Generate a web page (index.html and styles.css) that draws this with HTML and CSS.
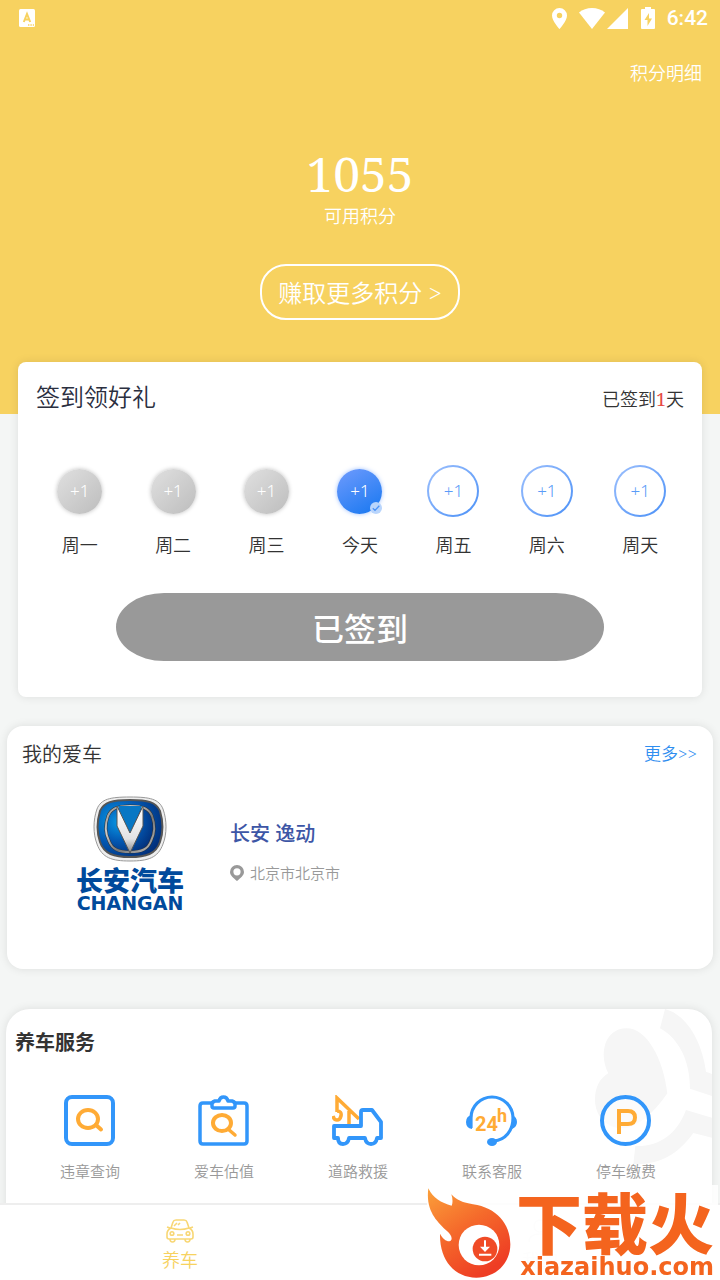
FILE: index.html
```html
<!DOCTYPE html>
<html lang="zh-CN">
<head>
    <meta charset="UTF-8">
    <meta name="viewport" content="width=device-width, initial-scale=1.0">
    <title>积分签到</title>
    <link rel="stylesheet" href="styles.css">
</head>
<body>
    <header class="hero">
        <!-- Status bar -->
        <div class="status-bar">
            <svg width="16" height="18" viewBox="0 0 16 18">
                <rect width="16" height="18" rx="1.5" fill="#fff"/>
                <path d="M4.8 13 8 5l3.2 8M6 10.4h4" fill="none" stroke="#f7d260" stroke-width="2"/>
                <path d="M9 16h1.4M11.4 16h1.4M13.8 16h1.2" stroke="#f7d260" stroke-width="1.4"/>
            </svg>
            <div class="status-icons">
                <svg width="15" height="21" viewBox="0 0 15 21">
                    <path fill="#fff" fill-rule="evenodd" d="M7.500 0A7.500 7.500 0 0 0 0 7.500C0 13 7.500 21 7.500 21S15 13 15 7.500A7.500 7.500 0 0 0 7.500 0zM7.500 4.800a2.700 2.700 0 1 1 0 5.400a2.700 2.700 0 0 1 0-5.400z"/>
                </svg>
                <svg class="wifi" width="26" height="21" viewBox="0 0 26 21">
                    <path fill="#fff" d="M13 21 0 4.500C3.500 1.500 8 0 13 0s9.500 1.500 13 4.500z"/>
                </svg>
                <svg class="signal" width="21" height="21" viewBox="0 0 21 21">
                    <path fill="#fff" d="M21 0v21H0z"/>
                </svg>
                <svg class="battery" width="14" height="22" viewBox="0 0 14 22">
                    <path fill="#fff" d="M4 0h6v2h3q1 0 1 1v18q0 1-1 1H1q-1 0-1-1V3q0-1 1-1h3z"/>
                    <path fill="#f7d260" d="M8 6 3.500 13H6.500v6L11 11.500H8z"/>
                </svg>
                <span class="clock">6:42</span>
            </div>
        </div>

        <a class="detail-link" href="#">积分明细</a>
        <div class="points">1055</div>
        <div class="points-label">可用积分</div>
        <button class="earn-btn" type="button">赚取更多积分 &gt;</button>
    </header>

    <main class="content">
        <!-- Sign in -->
        <section class="card sign-card">
            <div class="card-head">
                <h2 class="sign-title">签到领好礼</h2>
                <span class="sign-count">已签到<em>1</em>天</span>
            </div>
            <ul class="days">
                <li><span class="dot-wrap"><span class="dot past">+1</span></span>周一</li>
                <li><span class="dot-wrap"><span class="dot past">+1</span></span>周二</li>
                <li><span class="dot-wrap"><span class="dot past">+1</span></span>周三</li>
                <li>
                    <span class="dot-wrap">
                        <span class="dot today">+1
                            <svg class="tick" width="12" height="12" viewBox="0 0 12 12">
                                <circle cx="6" cy="6" r="6" fill="#b9d5fc"/>
                                <path d="M2.800 6.200 5 8.400 9.300 3.800" fill="none" stroke="#4a92f7" stroke-width="1.300"/>
                            </svg>
                        </span>
                    </span>今天
                </li>
                <li><span class="dot-wrap"><span class="dot next">+1</span></span>周五</li>
                <li><span class="dot-wrap"><span class="dot next">+1</span></span>周六</li>
                <li><span class="dot-wrap"><span class="dot next">+1</span></span>周天</li>
            </ul>
            <button class="signed-btn" type="button">已签到</button>
        </section>

        <!-- My car -->
        <section class="card car-card">
            <div class="card-head">
                <h2 class="car-title">我的爱车</h2>
                <a class="more-link" href="#">更多&gt;&gt;</a>
            </div>
            <div class="car">
                <div class="brand">
                    <svg width="76" height="66" viewBox="0 0 76 66">
                        <defs>
                            <linearGradient id="chrome" x1="0" y1="0" x2="1" y2="1">
                                <stop offset="0" stop-color="#8a8a8a"/>
                                <stop offset=".3" stop-color="#ccc"/>
                                <stop offset=".6" stop-color="#777"/>
                                <stop offset="1" stop-color="#bbb"/>
                            </linearGradient>
                            <radialGradient id="blue" cx=".28" cy=".35" r=".8">
                                <stop offset="0" stop-color="#079ae6"/>
                                <stop offset=".5" stop-color="#0359b3"/>
                                <stop offset="1" stop-color="#022c76"/>
                            </radialGradient>
                            <linearGradient id="silver" x1="0" y1="0" x2="0" y2="1">
                                <stop offset="0" stop-color="#fff"/>
                                <stop offset=".7" stop-color="#e2e2e4"/>
                                <stop offset="1" stop-color="#888"/>
                            </linearGradient>
                        </defs>
                        <path d="M38 1C58 1 67 3 71 13c4 11 4 25 0 35-5 14-15 17-33 17S10 62 5 48C1 38 1 24 5 13 9 3 18 1 38 1z" fill="#eee" stroke="#999" stroke-width="1"/>
                        <path d="M38 4C56 4 64 6 68 15c3 10 3 22 0 31-4 12-14 15-30 15S12 58 8 46C5 37 5 25 8 15 12 6 20 4 38 4z" fill="url(#blue)" stroke="#555" stroke-width="2"/>
                        <path d="M38 10c14 0 19 3 22 10 3 8 3 17-1 25-3 8-9 11-21 11s-18-3-21-11c-4-8-4-17-1-25 3-7 8-10 22-10z" fill="url(#blue)" stroke="#333" stroke-width="3"/>
                        <path d="M38 10c14 0 19 3 22 10 3 8 3 17-1 25-3 8-9 11-21 11s-18-3-21-11c-4-8-4-17-1-25 3-7 8-10 22-10z" fill="none" stroke="url(#chrome)" stroke-width="2"/>
                        <path d="M26 10h24L38 37z" fill="#0877c4"/>
                        <path d="M25 10v20l13 27 13-27V10L38 37z" fill="url(#silver)" stroke="#555" stroke-width="1"/>
                    </svg>
                    <span class="brand-cn">长安汽车</span>
                    <span class="brand-en">CHANGAN</span>
                </div>
                <div class="car-info">
                    <h3 class="car-name">长安 逸动</h3>
                    <p class="car-city">
                        <svg width="14" height="16" viewBox="0 0 14 16">
                            <path fill="#999" fill-rule="evenodd" d="M7 0a7 7 0 0 0-7 7c0 3.500 3.500 6 7 9 3.500-3 7-5.500 7-9a7 7 0 0 0-7-7zM7 3.200a3.600 3.600 0 1 1 0 7.200a3.600 3.600 0 0 1 0-7.200z"/>
                        </svg>
                        北京市北京市
                    </p>
                </div>
            </div>
        </section>

        <!-- Services -->
        <section class="card service-card">
            <svg class="service-bg" width="132" height="180" viewBox="0 57 396 540">
                <g fill="#f6f6f6">
                    <path d="M85 250C55 190 75 115 140 115c60 0 110 90 122 195-35 50-65 78-90 90-60 40-127-5-127-70 0-40 15-65 40-80z"/>
                    <path d="M255 57c60 15 110 90 123 188l18 7v66l-66-22C330 210 295 145 240 115z"/>
                    <path d="M318 360l78 23v60l-56-14c-50 70-110 97-180 93l6-54c70 3 125-35 152-108z"/>
                </g>
            </svg>
            <h2 class="service-title">养车服务</h2>
            <nav class="services">
                <a href="#">
                    <svg width="52" height="52" viewBox="0 0 52 52" fill="none">
                        <rect x="2" y="2" width="47" height="47" rx="6" stroke="#3296fa" stroke-width="4"/>
                        <ellipse cx="24" cy="24" rx="10" ry="9" stroke="#ffab35" stroke-width="4"/>
                        <path d="m32 30 5 4.500" stroke="#ffab35" stroke-width="4" stroke-linecap="round"/>
                    </svg>
                    违章查询
                </a>
                <a href="#">
                    <svg width="52" height="52" viewBox="0 0 52 52" fill="none">
                        <path d="M14 8H5q-3 0-3 3v35q0 3 3 3h41q3 0 3-3V11q0-3-3-3h-9" stroke="#3296fa" stroke-width="3.500"/>
                        <path d="M16 13q-2 0-2-2V9q0-2 3-3h4q1-4 4.500-4T30 6h4q3 1 3 3v2q0 2-2 2z" stroke="#3296fa" stroke-width="3.500" stroke-linejoin="round"/>
                        <ellipse cx="24" cy="28" rx="9" ry="8" stroke="#ffab35" stroke-width="4"/>
                        <path d="m30 34 7 6" stroke="#ffab35" stroke-width="3.500" stroke-linecap="round"/>
                    </svg>
                    爱车估值
                </a>
                <a href="#">
                    <svg width="52" height="52" viewBox="0 0 52 52" fill="none">
                        <path d="M5 17V3l22 21M17 16v13M5 16q5 0 4 5-1 4-4 4t-4-4" stroke="#ffab35" stroke-width="3.500"/>
                        <path d="M6 43H2V31h27V17q0-2 2-2h9l9 12v16h-4q-1 6-6 6t-6-6H17q-1 6-6 6t-5-6z" stroke="#3296fa" stroke-width="3.800" stroke-linejoin="round"/>
                    </svg>
                    道路救援
                </a>
                <a href="#">
                    <svg width="52" height="52" viewBox="0 0 52 52" fill="none">
                        <path d="M5 33V23a21 21 0 0 1 42 0c0 13-8 22-19 23" stroke="#3296fa" stroke-width="3.200"/>
                        <path d="M6 20v14q-6-1-6-7t6-7zM46 20v14q5-2 5-7t-5-7z" fill="#3296fa"/>
                        <ellipse cx="26" cy="47" rx="5" ry="4" fill="#3296fa"/>
                        <text class="icon-24" x="9" y="36">24</text>
                        <text class="icon-h" x="31" y="27">h</text>
                    </svg>
                    联系客服
                </a>
                <a href="#">
                    <svg width="52" height="52" viewBox="0 0 52 52" fill="none">
                        <circle cx="25.500" cy="25.500" r="23.500" fill="#fff" fill-opacity=".6" stroke="#3296fa" stroke-width="4"/>
                        <path d="M19 39V16h9q7 0 7 6.500T28 29H19" stroke="#ffab35" stroke-width="4"/>
                    </svg>
                    停车缴费
                </a>
            </nav>
        </section>
    </main>

    <!-- Bottom tabs -->
    <nav class="tabs">
        <a class="tab active" href="#">
            <svg width="28" height="24" viewBox="0 0 28 24" fill="none" stroke="#f8d775" stroke-width="1.600">
                <path d="M5 9 7 3q.6-2 3-2h8q2.400 0 3 2l2 6q4 2 4 6v3q0 2-2 2H3q-2 0-2-2v-3q0-4 4-6zM5 9q9 3 18 0M1 8l3 1M27 8l-3 1"/>
                <circle cx="6" cy="14.500" r="1.800"/>
                <circle cx="22" cy="14.500" r="1.800"/>
                <path d="M11 16h6M8 7l3-3M12 6l2-2M4 20q0 3 2.500 3T9 20M19 20q0 3 2.500 3t2.500-3"/>
            </svg>
            养车
        </a>
        <a class="tab" href="#">
            <svg width="28" height="24" viewBox="0 0 28 24" fill="none" stroke="#f0f0f0" stroke-width="1.600">
                <circle cx="14" cy="7" r="6"/>
                <path d="M3 23q0-8 11-8t11 8"/>
            </svg>
            我的
        </a>
    </nav>

    <!-- Site mark -->
    <div class="mark">
        <svg width="84" height="92" viewBox="0 0 252 276">
            <defs>
                <linearGradient id="fire" x1="0" y1="0" x2=".6" y2="1">
                    <stop offset="0" stop-color="#fba03a"/>
                    <stop offset=".5" stop-color="#f56a2b"/>
                    <stop offset="1" stop-color="#ee3d24"/>
                </linearGradient>
            </defs>
            <path fill="url(#fire)" d="M4 4c14 30 38 43 70 52 4-10 3-22-1-34 15 18 35 25 65 30 70 10 112 58 112 120 0 58-44 100-102 100-65 0-111-52-109-132 8 15 17 22 28 23 11-4 9-16-7-31C31 104-5 72 4 4z"/>
            <circle cx="156" cy="174" r="61" fill="#fff"/>
            <circle cx="174" cy="186" r="37" fill="#f04b26"/>
            <path d="M174 160v25M156 203h37" stroke="#fff" stroke-width="6"/>
            <path d="M159 179h30l-15 16z" fill="#fff"/>
        </svg>
        <div class="mark-text">
            <span class="mark-cn">下载火</span>
            <span class="mark-url">xiazaihuo.com</span>
        </div>
    </div>
</body>
</html>
```
FILE: styles.css
```css
* {
    box-sizing: border-box;
}

body {
    margin: 0;
    min-height: 100vh;
    overflow: hidden;
    background: #f4f6f5;
    color: #333;
    font-family: "Noto Serif", "Noto Sans CJK SC", serif;
    font-size: 18px;
    font-weight: 350;
}

h2,
h3,
p,
ul {
    margin: 0;
    padding: 0;
}

a {
    color: inherit;
    text-decoration: none;
}

button {
    font-family: inherit;
    font-weight: inherit;
    cursor: pointer;
}

svg {
    display: block;
    flex-shrink: 0;
}

/* header */
.hero {
    display: flex;
    flex-direction: column;
    align-items: center;
    height: 414px;
    background: #f7d260;
    color: #fff;
}

.status-bar {
    display: flex;
    justify-content: space-between;
    align-items: center;
    width: 100%;
    height: 36px;
    padding: 0 12px 0 19px;
}

.status-icons {
    display: flex;
    align-items: center;
}

.wifi {
    margin-left: 12px;
}

.signal {
    margin-left: 2px;
}

.battery {
    margin: 0 12px 0 13px;
}

.clock {
    font-family: Roboto, sans-serif;
    font-size: 21px;
    font-weight: 500;
    line-height: 36px;
}

.detail-link {
    align-self: flex-end;
    margin: 23px 18px 0 0;
    line-height: 28px;
}

.points {
    margin-top: 57px;
    font-size: 48px;
    font-weight: normal;
    line-height: 60px;
}

.points-label {
    line-height: 24px;
}

.earn-btn {
    height: 56px;
    margin-top: 36px;
    padding: 0 16px 2px;
    border: 2px solid #fff;
    border-radius: 26px;
    background: none;
    color: #fff;
    font-size: 24px;
}

/* cards */
.card {
    background: #fff;
    box-shadow: 0 0 10px rgba(0, 0, 0, 0.1);
}

.card-head {
    display: flex;
    justify-content: space-between;
    align-items: center;
}

.sign-card {
    position: relative;
    display: flex;
    flex-direction: column;
    margin: -52px 18px 0;
    padding-bottom: 36px;
    border-radius: 8px;
}

.sign-card .card-head {
    height: 72px;
    padding: 0 18px;
}

.sign-title {
    padding-bottom: 5px;
    color: #2b2f3f;
    font-size: 24px;
    font-weight: inherit;
}

.sign-count em {
    color: #e64a45;
    font-style: normal;
    font-weight: 400;
}

.days {
    display: grid;
    grid-template-columns: repeat(7, 1fr);
    margin-top: 31px;
    padding: 0 15px;
    list-style: none;
    text-align: center;
    line-height: 28px;
}

.dot-wrap {
    display: flex;
    justify-content: center;
    align-items: center;
    height: 52px;
    margin-bottom: 14px;
}

.dot {
    display: flex;
    justify-content: center;
    align-items: center;
    position: relative;
    width: 45px;
    height: 45px;
    border-radius: 50%;
    color: #fff;
    font-family: "Noto Sans", sans-serif;
    font-size: 17px;
}

.past {
    background: linear-gradient(135deg, #e0e0e0, #bdbdbd);
    box-shadow: 0 0 4px rgba(0, 0, 0, 0.25);
}

.today {
    background: linear-gradient(150deg, #6f9bfd, #1677f0);
    box-shadow: 0 0 4px rgba(60, 130, 255, 0.5);
}

.next {
    width: 52px;
    height: 52px;
    border: 2px solid transparent;
    background: linear-gradient(#fff, #fff) padding-box, linear-gradient(135deg, #9dc0fd, #4a90f7) border-box;
    color: #5a9cf8;
}

.tick {
    position: absolute;
    right: 0;
    bottom: 0;
}

.signed-btn {
    align-self: center;
    width: 71.4%;
    height: 68px;
    margin-top: 34px;
    padding-bottom: 2px;
    border: 0;
    border-radius: 48px / 34px;
    background: #999;
    color: #fff;
    font-size: 32px;
    font-weight: 500;
}

.car-card {
    margin: 29px 7px 0;
    padding-bottom: 57px;
    border-radius: 16px;
}

.car-card .card-head {
    height: 54px;
    padding: 0 16px 0 15px;
}

.car-title {
    font-size: 20px;
    font-weight: inherit;
}

.more-link {
    padding-bottom: 2px;
    color: #2f8ef0;
    font-size: 17px;
}

.car {
    display: flex;
    gap: 46px;
    padding: 16px 0 0 69px;
}

.brand {
    display: flex;
    flex-direction: column;
    align-items: center;
    width: 108px;
    color: #004a9c;
}

.brand-cn {
    margin-top: 6px;
    font-size: 27px;
    font-weight: 900;
    line-height: 26px;
}

.brand-en {
    font-family: "DejaVu Sans", sans-serif;
    font-size: 19px;
    font-weight: bold;
    line-height: 18px;
}

.car-info {
    padding-top: 24px;
}

.car-name {
    color: #3d56a6;
    font-size: 20px;
    font-weight: 500;
    line-height: 28px;
}

.car-city {
    display: flex;
    align-items: center;
    gap: 6px;
    margin-top: 14px;
    color: #999;
    font-size: 15px;
    line-height: 22px;
}

.service-card {
    position: relative;
    height: 300px;
    margin: 40px 8px 0 6px;
    border-radius: 24px;
    overflow: hidden;
}

.service-bg {
    position: absolute;
    top: 0;
    right: 0;
}

.service-title {
    padding: 20px 9px 0;
    font-size: 20px;
    line-height: 28px;
}

.services {
    display: grid;
    grid-template-columns: repeat(5, 1fr);
    position: relative;
    margin-top: 38px;
    padding: 0 19px 0 17px;
}

.services a {
    display: flex;
    flex-direction: column;
    align-items: center;
    gap: 12px;
    color: #999;
    font-size: 15px;
    line-height: 24px;
}

.icon-24,
.icon-h {
    fill: #ffab35;
    font-family: Roboto, sans-serif;
    font-size: 20px;
    font-weight: bold;
}

.icon-h {
    font-size: 18px;
}

/* bottom tabs */
.tabs {
    position: fixed;
    right: 0;
    bottom: 0;
    left: 0;
    display: flex;
    height: 77px;
    border-top: 2px solid #eee;
    background: #fff;
}

.tab {
    flex: 1;
    display: flex;
    flex-direction: column;
    align-items: center;
    padding-top: 14px;
    color: #f0f0f0;
    line-height: 34px;
}

.tab.active {
    color: #f7d260;
}

.mark {
    position: fixed;
    right: 2px;
    bottom: 0;
    display: flex;
    width: 291px;
    height: 95px;
    padding-top: 2px;
    background: rgba(255, 255, 255, 0.85);
    color: #f4641e;
}

.mark-text {
    display: flex;
    flex-direction: column;
    align-items: flex-end;
    flex: 1;
    padding-right: 4px;
}

.mark-cn {
    margin-top: 6px;
    font-size: 66px;
    font-weight: 900;
    line-height: 60px;
}

.mark-url {
    margin-top: 4px;
    font-family: "DejaVu Sans", sans-serif;
    font-size: 24px;
    font-weight: bold;
    line-height: 20px;
}
```
